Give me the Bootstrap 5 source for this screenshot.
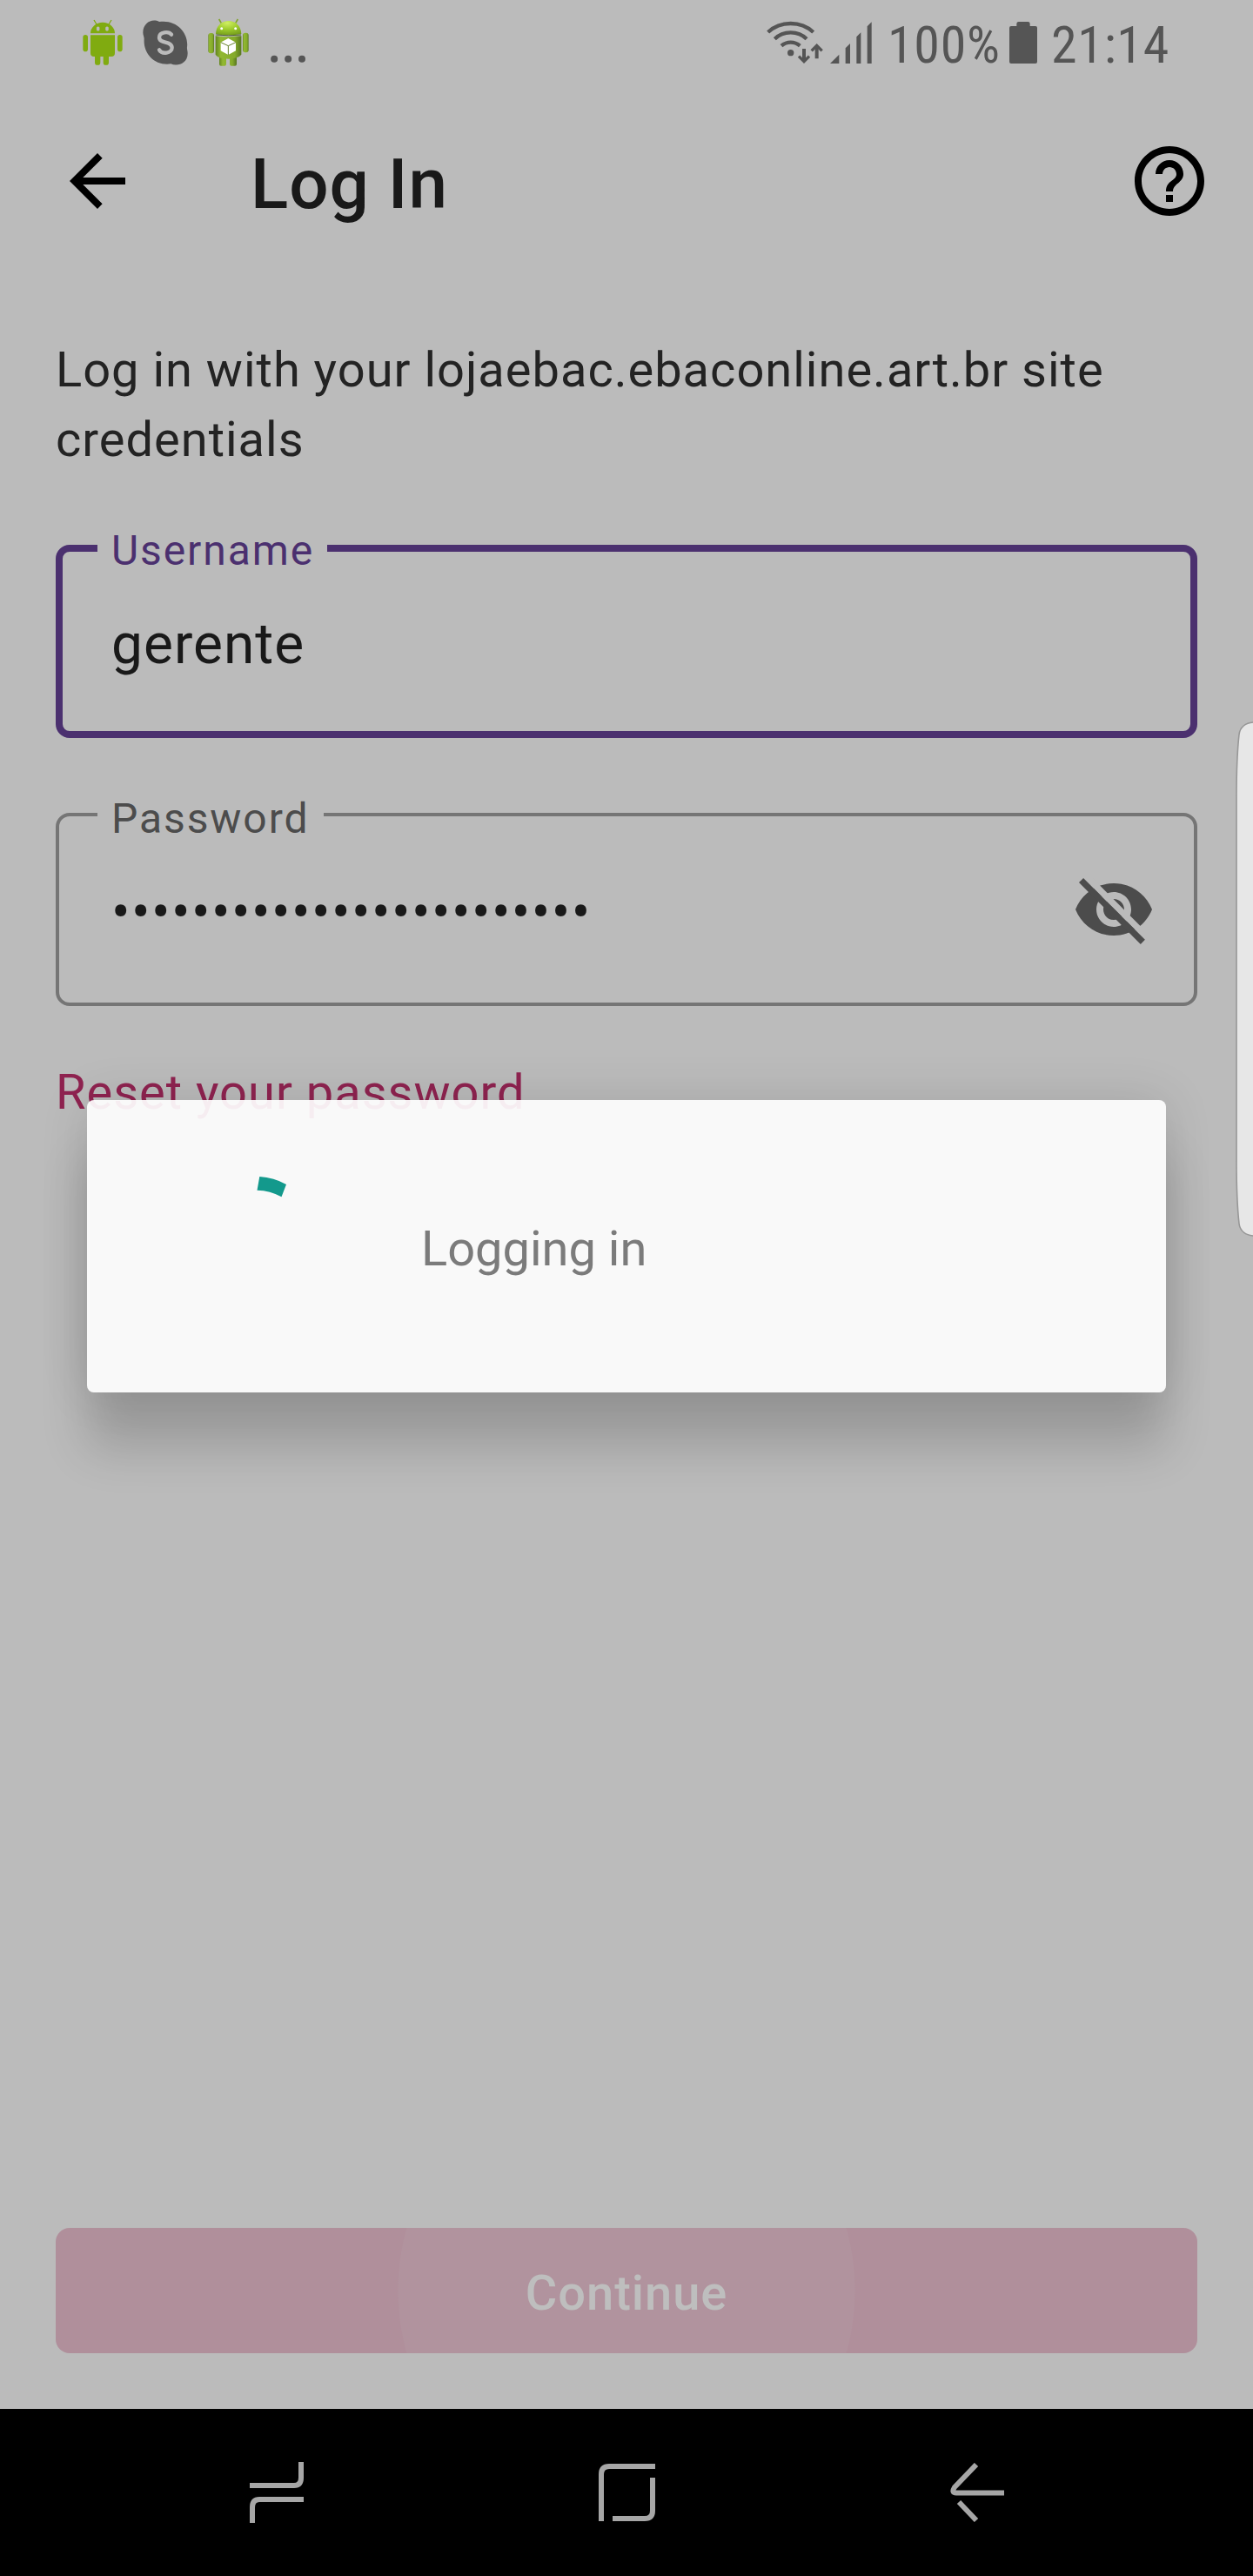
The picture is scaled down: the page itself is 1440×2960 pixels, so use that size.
<!DOCTYPE html>
<html lang="en">
<head>
<meta charset="utf-8">
<meta name="viewport" content="width=device-width, initial-scale=1">
<title>Log In</title>
<link href="https://cdn.jsdelivr.net/npm/bootstrap@5.3.0/dist/css/bootstrap.min.css" rel="stylesheet">
<style>
  body { font-family: Roboto, sans-serif; background: #bbb; color: #191919; }
  svg { display: block; flex: none; }
  .screen { width: 1440px; height: 2960px; }
  .statusbar { height: 100px; padding: 0 96px 0 95px; color: #555; }
  .notices { gap: 23px; }
  .more { margin-left: 2px; }
  .bars { margin-left: 8px; }
  .battery { margin-left: 12px; }
  .status-text { font: 400 60px/60px "Roboto Condensed", Roboto, sans-serif; letter-spacing: .7px; padding-top: 3px; }
  .charge { width: 128px; margin-left: 18px; }
  .clock { width: 136px; margin-left: 16px; }
  .appbar { height: 216px; padding: 0 48px 0 64px; color: #000; }
  .title { font-size: 80px; line-height: 80px; font-weight: 500; letter-spacing: 1px; color: #191919; padding: 8px 0 0 128px; }
  .content { padding: 69px 64px 64px; }
  .copy { font-size: 56px; line-height: 80px; letter-spacing: 1px; color: #232323; }
  .field { height: 222px; border: 4px solid #757575; border-radius: 16px; padding: 0 44px 0 60px; color: #4c4c4c; }
  .field.active { border: 8px solid #4b306f; padding: 0 40px 0 56px; color: #4b306f; }
  .field-label { left: 44px; top: -21px; width: 260px; padding-left: 16px; background: #bbb; font-size: 48px; line-height: 48px; letter-spacing: 1.92px; }
  .active .field-label { left: 40px; top: -25px; width: 264px; }
  .field .form-control { height: 80px; margin-top: 8px; font-size: 64px; line-height: 80px; letter-spacing: 1px; color: #191919; }
  .field .bullets { letter-spacing: 1.4px; }
  .first { margin-top: 81px; }
  .second { margin-top: 86px; }
  .reset { margin-top: 59px; color: #8f2350; text-decoration: none; }
  .continue { height: 144px; border: 0; border-radius: 16px; font-size: 56px; line-height: 80px; font-weight: 500; letter-spacing: 1px; color: #bebebe; padding: 6px 0 0;
    background: radial-gradient(circle 264px at 50% 50%, #b1939e 262px, #b08f9b 263px); }
  .continue:hover { color: #bebebe; }
  .navkeys { height: 192px; background: #000; padding: 0 286px 0 287px; color: #a6a6a6; }
  .progress-dialog { left: 100px; top: 1264px; width: 1240px; height: 336px; border-radius: 8px; background: rgba(254,254,254,.925); padding-left: 184px;
    box-shadow: 0 65px 54px rgba(0,0,0,.165), 0 0 56px rgba(0,0,0,.12); }
  .arc { margin-top: 76px; }
  .message { font-size: 56px; line-height: 80px; color: #7b7b7b; padding-top: 6px; margin-left: 140px; }
  .edge { left: 1418px; top: 826px; }
</style>
</head>
<body>
<div class="screen position-relative overflow-hidden d-flex flex-column">

  <header class="statusbar d-flex align-items-center">
    <div class="notices d-flex">
      <svg width="46" height="60" viewBox="105 60 138 180" fill="#80ab10">
        <path d="M144 69l9 15M204 69l-9 15" stroke="#80ab10" stroke-width="4"/>
        <path fill-rule="evenodd" d="M132 115a42 38 0 0 1 84 0zM153 99a5.500 5.500 0 1 0 10 0a5.500 5.500 0 1 0-10 0zM184 99a5.500 5.500 0 1 0 10 0a5.500 5.500 0 1 0-10 0z"/>
        <path d="M132 121h84v62q0 12-12 12h-9v20a9.500 9.500 0 0 1-19 0v-20h-10v20a9.500 9.500 0 0 1-19 0v-20h-3q-12 0-12-12z"/>
        <rect x="106" y="120" width="17" height="58" rx="8.500"/><rect x="225" y="120" width="17" height="58" rx="8.500"/>
      </svg>
      <svg width="52" height="60" viewBox="312 60 156 180">
        <path fill="#555" d="M369 75C345 62 313 78 313 112c0 10 4 15 4 22c-4 52 38 94 92 86c22 10 58 0 58-36c0-8-3-14-2-22c6-48-36-96-96-87z"/>
        <path fill="none" stroke="#bbb" stroke-width="13" stroke-linecap="round" d="M411 119c-6-8-16-8-24-7c-12 2-18 8-18 17c0 24 44 10 44 36c0 18-34 24-44 7"/>
      </svg>
      <svg width="47" height="60" viewBox="537 60 141 180">
        <defs>
          <linearGradient id="gBody" x2="1"><stop offset="0" stop-color="#648520"/><stop offset=".2" stop-color="#92b832"/><stop offset=".75" stop-color="#84aa2a"/><stop offset="1" stop-color="#587620"/></linearGradient>
          <radialGradient id="gHead" cx=".45" cy=".15" r=".9"><stop offset="0" stop-color="#d0ef62"/><stop offset=".5" stop-color="#9dcb2c"/><stop offset="1" stop-color="#739b1c"/></radialGradient>
        </defs>
        <path d="M575 66l8 14M640 66l-8 14" stroke="#82a52c" stroke-width="5"/>
        <g fill="url(#gBody)">
          <path d="M576 192h24v29q0 6-6 6h-12q-6 0-6-6zM612 192h24v29q0 6-6 6h-12q-6 0-6-6z"/>
          <rect x="538" y="114" width="20" height="70" rx="9"/><rect x="657" y="113" width="20" height="68" rx="9"/>
          <path d="M563 124q44 5 89 0v64q-10 14-44 15q-36-1-45-15z"/>
        </g>
        <path fill="url(#gHead)" d="M564 117c2-60 86-60 88 0q-44 8-88 0z"/>
        <path fill="none" stroke="#34480f" stroke-width="2.500" d="M565 120q43 5 86 0"/>
        <circle cx="584" cy="98" r="4.500" fill="#fff"/><circle cx="632" cy="98" r="4.500" fill="#fff"/>
        <path fill="#fff" d="M607 132l26 14v29l-26 14-26-14v-29z"/>
        <path fill="none" stroke="#66802c" stroke-width="3" d="M581 146l26 12 26-12M607 158v31"/>
      </svg>
      <svg class="more" width="40" height="60" viewBox="753 60 120 180" fill="#555"><circle cx="765.500" cy="203.500" r="12"/><circle cx="813.500" cy="203.500" r="12"/><circle cx="861" cy="203.500" r="12"/></svg>
    </div>

    <svg class="ms-auto" width="65" height="60" viewBox="63 60 195 180" fill="none" stroke="#555">
      <path stroke-width="13" d="M68 111Q100 81 146 81T224 111M91 134Q113 112 146 112T201 134M114 158Q128 146 146 146T178 158"/>
      <circle cx="146" cy="182" r="11" fill="#555" stroke="none"/>
      <path stroke-width="12" d="M192 168v42M236 160v42"/>
      <path stroke-width="10" d="M174 194l18 18 18-18M218 175l18-18 18 18"/>
    </svg>
    <svg class="bars" width="48" height="60" viewBox="281 60 144 180" fill="#555"><path d="M281 219l31-31v31zM334 166l16-16v69h-16zM372 127l15-15v107h-15zM409 91l15-15v143h-15z"/></svg>
    <span class="status-text charge text-nowrap">100%</span>
    <svg class="battery" width="32" height="60" viewBox="900 60 96 180" fill="#555"><path d="M925 90V82q0-7 7-7h32q7 0 7 7v8h19q6 0 6 6v117q0 6-6 6h-84q-6 0-6-6V96q0-6 6-6z"/></svg>
    <span class="status-text clock text-nowrap">21:14</span>
  </header>

  <nav class="appbar d-flex align-items-center">
    <svg width="96" height="96" viewBox="0 0 24 24"><path d="M20 11H7.830l5.590-5.590L12 4l-8 8 8 8 1.410-1.410L7.830 13H20v-2z"/></svg>
    <h1 class="title m-0">Log In</h1>
    <svg class="ms-auto" width="96" height="96" viewBox="0 0 24 24"><path d="M11 18h2v-2h-2v2zm1-16C6.480 2 2 6.480 2 12s4.480 10 10 10 10-4.480 10-10S17.520 2 12 2zm0 18c-4.410 0-8-3.590-8-8s3.590-8 8-8 8 3.590 8 8-3.590 8-8 8zm0-14c-2.210 0-4 1.790-4 4h2c0-1.100.9-2 2-2s2 .9 2 2c0 2-3 1.750-3 5h2c0-2.250 3-2.500 3-5 0-2.210-1.790-4-4-4z"/></svg>
  </nav>

  <main class="content flex-grow-1 d-flex flex-column">
    <p class="copy m-0">Log in with your lojaebac.ebaconline.art.br site<br>credentials</p>
    <div class="field active first position-relative d-flex align-items-center">
      <label class="field-label position-absolute" for="user">Username</label>
      <input id="user" class="form-control border-0 bg-transparent p-0 shadow-none" type="text" value="gerente">
    </div>
    <div class="field second position-relative d-flex align-items-center">
      <label class="field-label position-absolute" for="pass">Password</label>
      <input id="pass" class="form-control bullets border-0 bg-transparent p-0 shadow-none" type="text" value="••••••••••••••••••••••••">
      <svg width="96" height="96" viewBox="0 0 24 24">
        <path fill="#4c4c4c" fill-rule="evenodd" d="M12 4.500C7 4.500 2.730 7.610 1 12c1.730 4.390 6 7.500 11 7.500s9.270-3.110 11-7.500c-1.730-4.390-6-7.500-11-7.500zM12 17c-2.760 0-5-2.240-5-5s2.240-5 5-5 5 2.240 5 5-2.240 5-5 5zm0-8c-1.660 0-3 1.340-3 3s1.340 3 3 3 3-1.340 3-3-1.340-3-3-3z"/>
        <path fill="#bbb" d="M3.270 3H5.900L22 19.100V21.700z"/>
        <path fill="#4c4c4c" d="M2 4.270L3.270 3l17.700 17.700L19.700 21.970z"/>
      </svg>
    </div>
    <a class="copy reset" href="#">Reset your password</a>
    <button class="btn continue w-100 mt-auto" type="button">Continue</button>
  </main>

  <footer class="navkeys d-flex justify-content-between align-items-center">
    <svg width="62" height="70" viewBox="0 0 62 70" fill="none" stroke="currentColor" stroke-width="6"><path d="M0 27H51Q59 27 59 18V0M62 43H11Q3 43 3 52V70"/></svg>
    <svg width="65" height="66" viewBox="0 0 65 66" fill="none" stroke="currentColor" stroke-width="6"><path d="M65 3H12Q3 3 3 12V66M62 16V54Q62 63 53 63H16"/></svg>
    <svg width="62" height="68" viewBox="0 0 62 68" fill="none" stroke="currentColor" stroke-width="6"><path d="M30 2L5 28Q1 34.500 7 34.500H62M10 45L30 66"/></svg>
  </footer>

  <svg class="edge position-absolute" width="22" height="598" viewBox="0 0 22 598"><path fill="#e7e7e7" stroke="#979797" stroke-width="1.600" d="M24 4C13 4 7 10 6 18C4 36 3 56 3 90V508C3 542 4 562 6 580C7 588 13 594 24 594z"/></svg>

  <div class="progress-dialog position-absolute d-flex align-items-center" role="dialog" aria-label="Logging in">
    <svg class="arc align-self-start" width="60" height="48" viewBox="0 0 60 48"><path fill="#13998c" d="M14.300 12A70 70 0 0 1 45 21L39.500 35.300A60 60 0 0 0 11.500 27.700z"/></svg>
    <span class="message">Logging in</span>
  </div>
</div>
<script src="https://cdn.jsdelivr.net/npm/bootstrap@5.3.0/dist/js/bootstrap.bundle.min.js"></script>
</body>
</html>
